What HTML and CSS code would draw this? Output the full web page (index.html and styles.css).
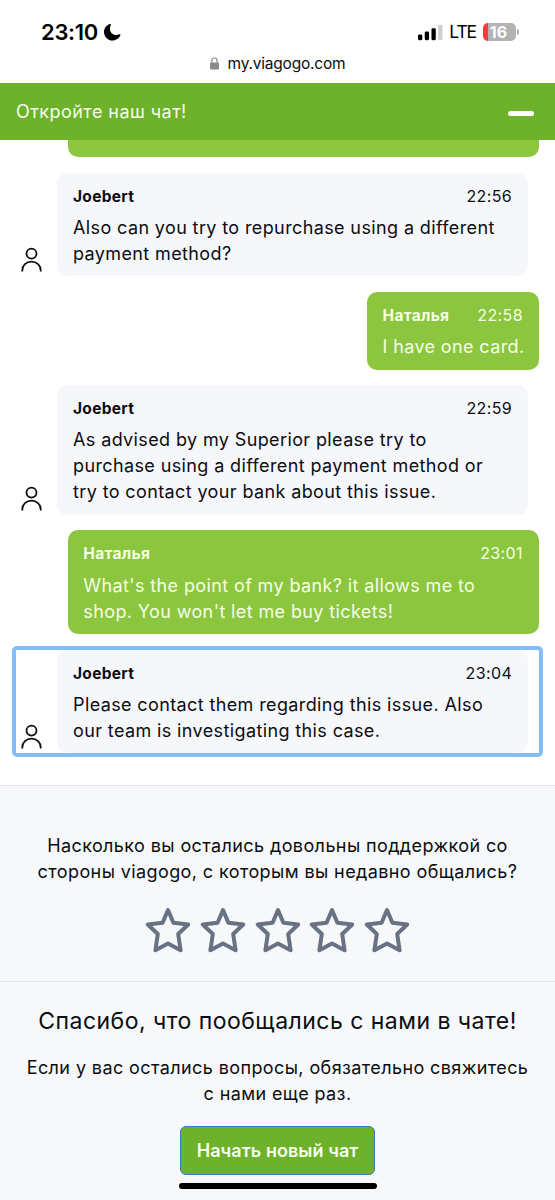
FILE: index.html
```html
<!DOCTYPE html>
<html lang="ru">
<head>
    <meta charset="UTF-8">
    <meta name="viewport" content="width=device-width, initial-scale=1.0">
    <title>my.viagogo.com</title>
    <link rel="stylesheet" href="styles.css">
</head>
<body>
    <svg class="defs" width="0" height="0">
        <symbol id="person" viewBox="0 0 22 26">
            <circle cx="10.500" cy="6.600" r="5"/>
            <path d="M1.300 24.500v-1.200c0-4.800 4-8.600 9.200-8.600s9.200 3.800 9.200 8.600v1.200"/>
        </symbol>
        <symbol id="star" viewBox="0 0 46 46">
            <path d="M23 3L28.4 15.8L43.2 17.500L33.2 27L35.600 43.200L23 36.500L10.400 43.200L12.800 27L2.800 17.500L17.600 15.800Z"/>
        </symbol>
    </svg>

    <div class="status">
        <div class="clock">
            <span class="time-now">23:10</span>
            <svg class="moon" viewBox="0 0 18 18"><path d="M6.3.5C2.6 1.7 0 5 0 8.9 0 13.9 4 18 9 18c3.8 0 7.1-2.400 8.400-5.800.3-.8-.3-1.100-.9-.8-1 .5-2.100.7-3.300.7-4.200 0-6.900-2.800-6.900-6.900 0-1.400.3-2.600.9-3.700.4-.7 0-1.300-.9-1z"/></svg>
        </div>
        <div class="indicators">
            <svg class="signal" viewBox="0 0 26 17">
                <rect x="0" y="10.500" width="4.500" height="6" rx="1.400"/>
                <rect x="7" y="7.500" width="4.500" height="9" rx="1.400"/>
                <rect x="14" y="4" width="4.500" height="12.500" rx="1.400"/>
                <rect x="21" y="0.500" width="4.500" height="16" rx="1.400" class="off"/>
            </svg>
            <span class="lte">LTE</span>
            <div class="battery"><span>16</span></div>
            <i class="cap"></i>
        </div>
    </div>
    <div class="address">
        <svg class="lock" viewBox="0 0 9 13"><rect x="0" y="5.500" width="9" height="7" rx="1.300"/><path d="M1.900 6V3.600a2.600 2.600 0 0 1 5.200 0V6"/></svg>
        <span>my.viagogo.com</span>
    </div>

    <div class="chat-header">
        <span>Откройте наш чат!</span>
        <i class="minimize"></i>
    </div>

    <div class="messages">
        <div class="bubble mine cut"></div>

        <div class="row">
            <svg class="avatar"><use href="#person"/></svg>
            <div class="bubble agent">
                <div class="meta"><b>Joebert</b><span>22:56</span></div>
                <p>Also can you try to repurchase using a different<br>payment method?</p>
            </div>
        </div>

        <div class="bubble mine short">
            <div class="meta"><b>Наталья</b><span>22:58</span></div>
            <p>I have one card.</p>
        </div>

        <div class="row">
            <svg class="avatar"><use href="#person"/></svg>
            <div class="bubble agent">
                <div class="meta"><b>Joebert</b><span>22:59</span></div>
                <p>As advised by my Superior please try to<br>purchase using a different payment method or<br>try to contact your bank about this issue.</p>
            </div>
        </div>

        <div class="bubble mine">
            <div class="meta"><b>Наталья</b><span>23:01</span></div>
            <p>What's the point of my bank? it allows me to<br>shop. You won't let me buy tickets!</p>
        </div>

        <div class="row focused">
            <svg class="avatar"><use href="#person"/></svg>
            <div class="bubble agent">
                <div class="meta"><b>Joebert</b><span>23:04</span></div>
                <p>Please contact them regarding this issue. Also<br>our team is investigating this case.</p>
            </div>
        </div>
    </div>

    <div class="rating">
        <p>Насколько вы остались довольны поддержкой со<br>стороны viagogo, с которым вы недавно общались?</p>
        <div class="stars">
            <svg><use href="#star"/></svg>
            <svg><use href="#star"/></svg>
            <svg><use href="#star"/></svg>
            <svg><use href="#star"/></svg>
            <svg><use href="#star"/></svg>
        </div>
    </div>

    <div class="ending">
        <h1>Спасибо, что пообщались с нами в чате!</h1>
        <p>Если у вас остались вопросы, обязательно свяжитесь<br>с нами еще раз.</p>
        <button>Начать новый чат</button>
        <i class="home-bar"></i>
    </div>
</body>
</html>
```

FILE: styles.css
```css
* {
    box-sizing: border-box;
}
body {
    margin: 0;
    height: 1200px;
    display: flex;
    flex-direction: column;
    overflow: hidden;
    font-family: Inter, "Liberation Sans", sans-serif;
    font-size: 18px;
    line-height: 26px;
    color: #0b0d12;
    background: #fff;
}
p, h1 {
    margin: 0;
    white-space: nowrap;
}
.defs {
    display: none;
}

/* phone status bar */
.status {
    height: 50px;
    padding: 14px 36px 0 41px;
    display: flex;
    justify-content: space-between;
    color: #000;
}
.clock, .indicators {
    display: flex;
    align-items: center;
    height: 36px;
}
.time-now {
    font-size: 22px;
    font-weight: 600;
    letter-spacing: -0.3px;
}
.moon {
    width: 17px;
    height: 18px;
    margin-left: 6px;
}
.signal {
    width: 25px;
    height: 17px;
}
.signal .off {
    fill: #cfcfcf;
}
.lte {
    margin-left: 6px;
    font-size: 17.5px;
    letter-spacing: -1.1px;
}
.battery {
    width: 33px;
    height: 18px;
    margin-left: 7px;
    border-radius: 5px;
    background: linear-gradient(to right, #fb3b3b 5.5px, #b3b3b3 5.5px);
    color: #fff;
    font-size: 16px;
    font-weight: 700;
    line-height: 18px;
    text-align: center;
}
.battery span {
    margin-right: 2px;
}
.cap {
    width: 2px;
    height: 6px;
    margin-left: 1px;
    border-radius: 0 2px 2px 0;
    background: #b3b3b3;
}
.address {
    height: 33px;
    padding-left: 1px;
    display: flex;
    justify-content: center;
    gap: 8px;
    font-size: 15.5px;
    line-height: 28px;
    letter-spacing: -0.2px;
}
.lock {
    width: 9px;
    height: 13px;
    margin-top: 7px;
    fill: #8a8a8e;
}
.lock path {
    fill: none;
    stroke: #8a8a8e;
    stroke-width: 1.2;
}

.chat-header {
    height: 57px;
    flex: none;
    padding: 0 21px 0 16px;
    display: flex;
    align-items: center;
    justify-content: space-between;
    background: #6eb12a;
    color: #f4ffe9;
    letter-spacing: 0.45px;
}
.minimize {
    width: 26px;
    height: 5px;
    margin-top: 3px;
    border-radius: 2.5px;
    background: #fff;
}

/* conversation */
.messages {
    height: 644.5px;
    flex: none;
    padding: 0 16px 0 15.5px;
    display: flex;
    flex-direction: column;
    align-items: flex-end;
    gap: 15.5px;
    letter-spacing: 0.38px;
}
.row {
    width: 523.5px;
    padding-right: 10.8px;
    display: flex;
    align-items: flex-end;
    justify-content: space-between;
}
.avatar {
    width: 22px;
    height: 26px;
    margin: 0 0 3px 5.5px;
    fill: none;
    stroke: #0b0d12;
    stroke-width: 1.8;
}
.bubble {
    width: 471.2px;
    padding: 12px 16px 9.6px;
    border-radius: 10px;
}
.agent {
    background: #f6f7fa;
}
.mine {
    padding-left: 15.5px;
    background: #8cc63f;
    color: #f4ffe4;
}
.cut {
    height: 17px;
    padding: 0;
    border-radius: 0 0 10px 10px;
}
.short {
    width: 172px;
}
.meta {
    display: flex;
    align-items: baseline;
    justify-content: space-between;
    height: 22px;
    margin-bottom: 8.2px;
    font-size: 16px;
    line-height: 22px;
}
.meta b {
    font-size: 15.5px;
    letter-spacing: 0.3px;
}
.meta span {
    letter-spacing: 0.4px;
}
.focused {
    outline: 4px solid #84bdf9;
    outline-offset: -0.5px;
    border-radius: 1px;
}

/* feedback and closing blocks */
.rating {
    height: 196.5px;
    flex: none;
    padding-top: 47px;
    border-top: 1.5px solid #e4e6e9;
    background: #f6f8fa;
    text-align: center;
    letter-spacing: 0.4px;
}
.stars {
    display: flex;
    justify-content: center;
    gap: 8.7px;
    margin-top: 22px;
}
.stars svg {
    width: 46px;
    height: 46px;
    fill: none;
    stroke: #687284;
    stroke-width: 4;
    stroke-linejoin: round;
}
.ending {
    flex: 1;
    display: flex;
    flex-direction: column;
    align-items: center;
    padding-top: 24px;
    border-top: 1.5px solid #e4e6e9;
    background: #f6f8fa;
    text-align: center;
    letter-spacing: 0.4px;
}
h1 {
    margin-bottom: 19px;
    font-size: 23px;
    font-weight: 400;
    line-height: 30px;
    letter-spacing: 0.47px;
}
button {
    width: 195px;
    height: 49px;
    margin-top: 19px;
    padding: 0;
    flex: none;
    border: 1.5px solid #2f80c0;
    border-radius: 6px;
    background: #6eb12a;
    color: #f8fff1;
    font-family: inherit;
    font-size: 18px;
    font-weight: 600;
    letter-spacing: 0.05px;
    white-space: nowrap;
}
.home-bar {
    width: 198px;
    height: 6px;
    margin-top: 8px;
    border-radius: 3px;
    background: #000;
}
```
